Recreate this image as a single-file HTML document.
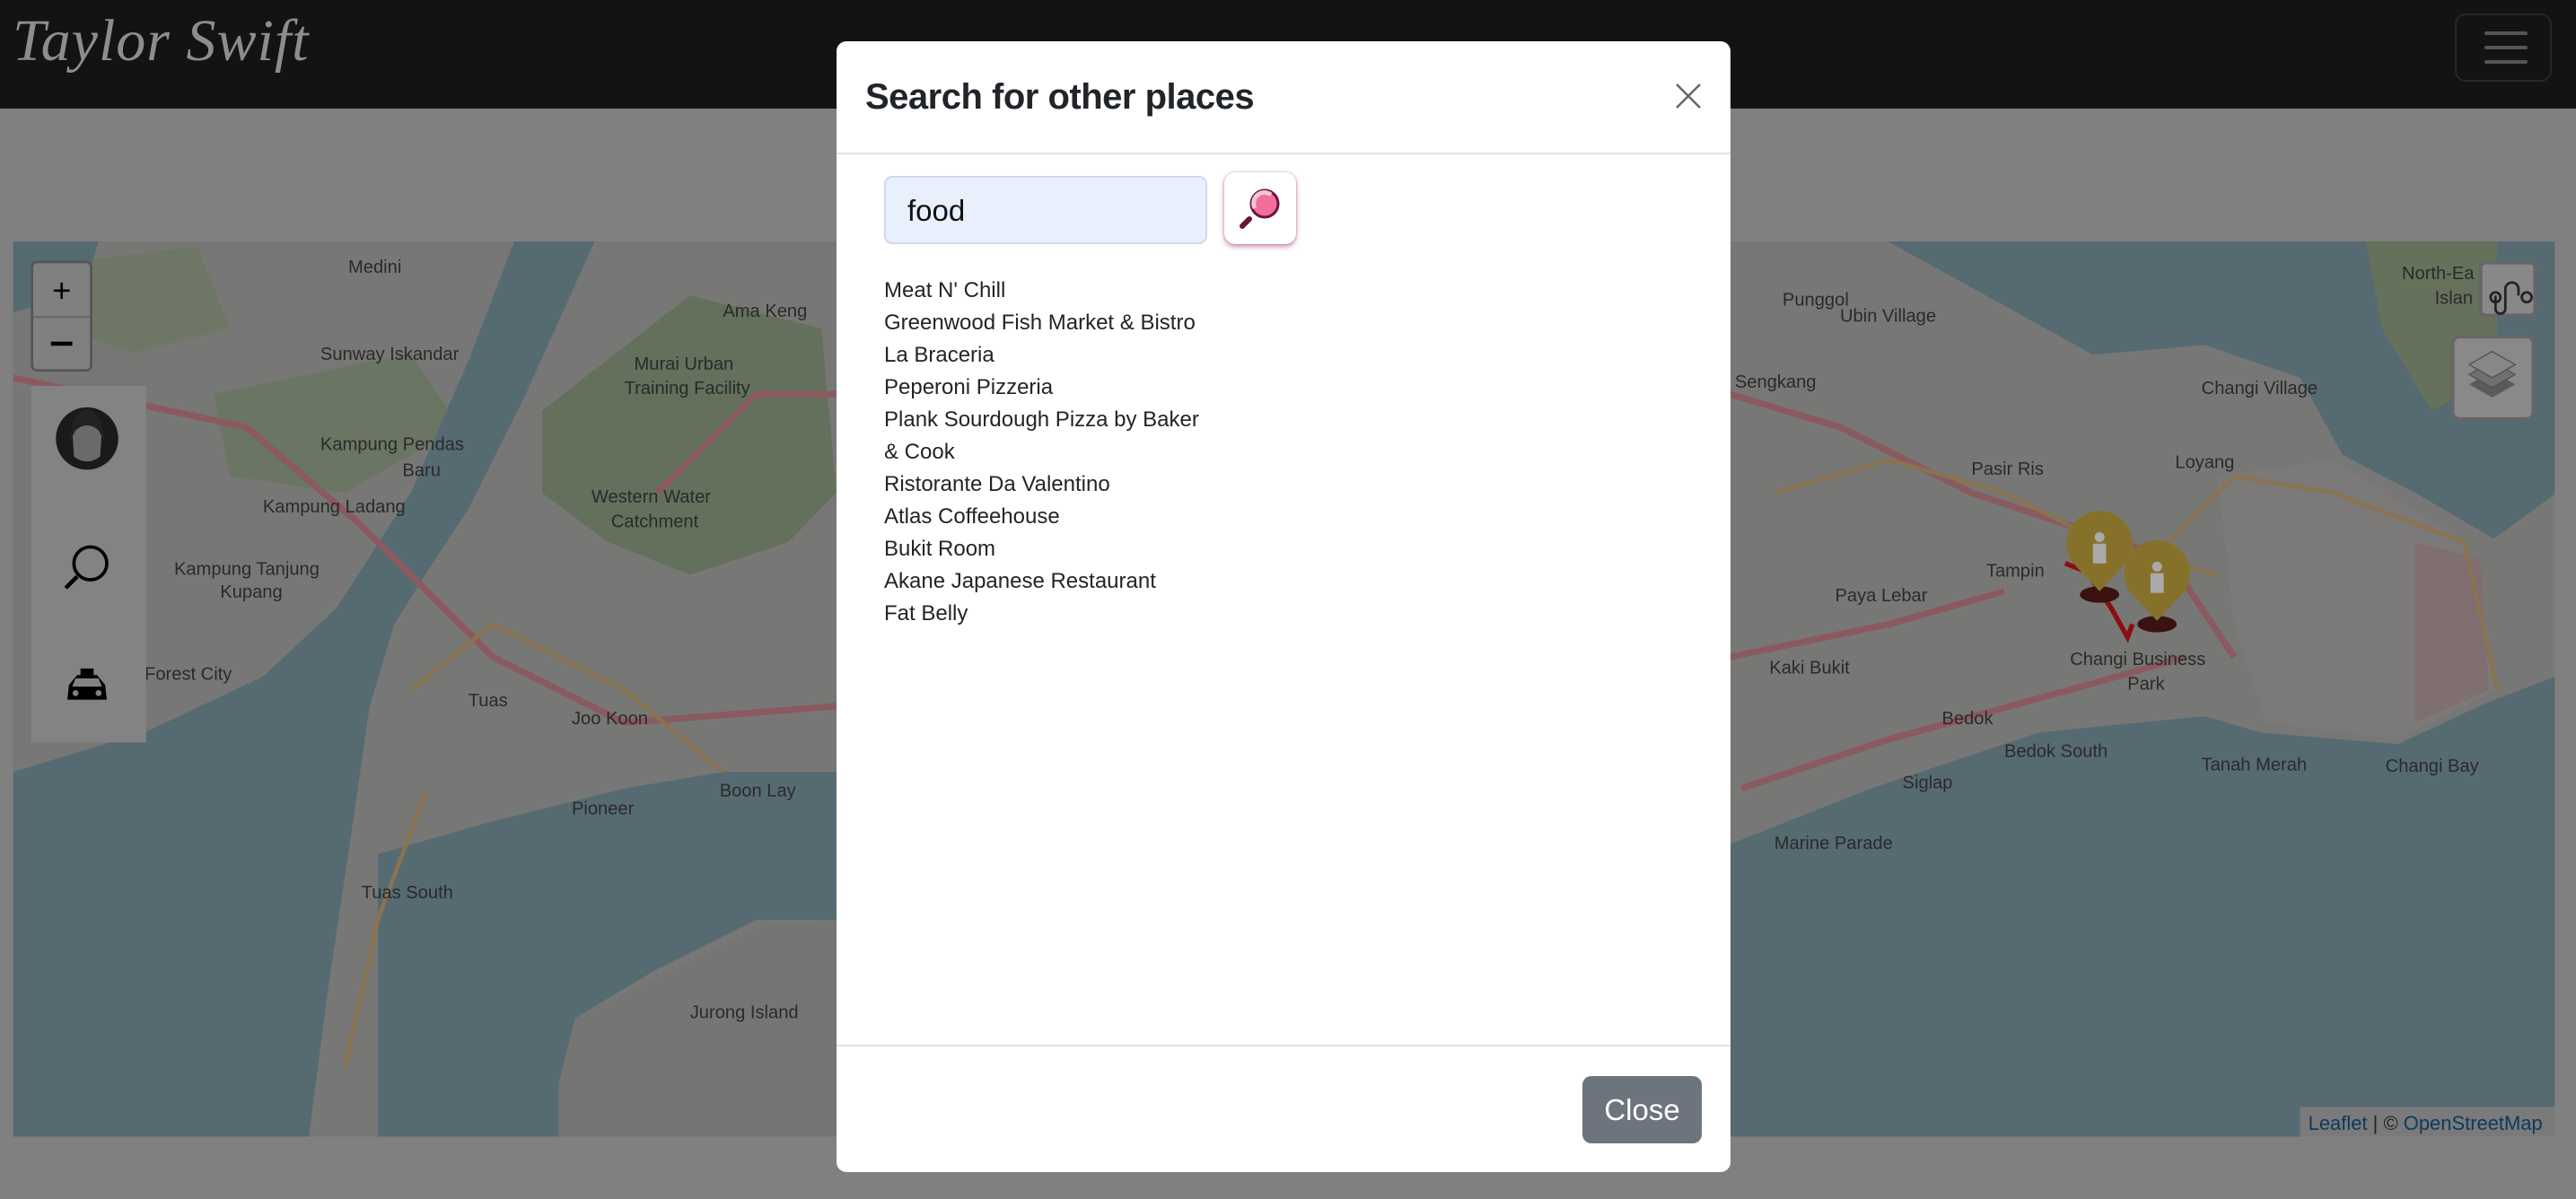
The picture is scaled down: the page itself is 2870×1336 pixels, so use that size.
<!DOCTYPE html>
<html><head><meta charset="utf-8"><style>
html,body{margin:0;padding:0}
body{width:2870px;height:1336px;position:relative;overflow:hidden;background:#808080;font-family:"Liberation Sans",sans-serif}
.nav{position:absolute;left:0;top:0;width:2870px;height:121px;background:#121315}
.logo{position:absolute;left:14px;top:8px;font-family:"Liberation Serif",serif;font-style:italic;font-size:66px;color:#8d8d8d;letter-spacing:1px;font-weight:normal}
.ham{position:absolute;left:2735px;top:15px;width:108px;height:76px;border:2px solid #262729;border-radius:12px;box-sizing:border-box}
.ham i{position:absolute;left:31px;width:48px;height:4px;background:#555;border-radius:2px}
svg.map{position:absolute;left:0;top:0}
.modal{position:absolute;left:932px;top:46px;width:996px;height:1260px;background:#fff;border-radius:11px;box-sizing:border-box}
.title{position:absolute;left:32px;top:40px;font-size:40px;color:#212529;font-weight:bold;letter-spacing:-0.5px}
.x{position:absolute;left:934px;top:46px}
.hr1{position:absolute;left:0;top:124px;width:996px;height:2px;background:#dee2e6}
.hr2{position:absolute;left:0;top:1118px;width:996px;height:2px;background:#dee2e6}
.inp{position:absolute;left:53px;top:150px;width:360px;height:76px;background:#e8f0fe;border:2px solid #cfd9ea;border-radius:9px;box-sizing:border-box;font-size:33px;color:#111;padding:18px 0 0 24px}
.btn{position:absolute;left:432px;top:146px;width:80px;height:80px;background:#fff;border-radius:12px;box-shadow:0 3px 6px rgba(170,60,130,.55),0 0 2px rgba(170,60,130,.5)}
.list{position:absolute;left:53px;top:260px;width:360px;font-size:24px;line-height:36px;color:#212529}
.close{position:absolute;left:831px;top:1153px;width:133px;height:75px;background:#6c757d;color:#fff;border-radius:10px;font-size:33px;text-align:center;line-height:75px}
</style></head><body>
<div class="nav"><div class="logo">Taylor Swift</div>
<div class="ham"><i style="top:18px"></i><i style="top:34px"></i><i style="top:50px"></i></div></div>

<svg class="map" width="2870" height="1336" viewBox="0 0 1568 730" preserveAspectRatio="none">
<rect x="8" y="147" width="1547" height="545" fill="#777875"/>
<path d="M330,250 L420,180 L500,200 L509,300 L480,330 L420,350 L370,330 L330,300Z" fill="#63705c"/>
<path d="M130,240 L250,215 L280,260 L210,300 L140,290Z" fill="#6b7564"/>
<path d="M40,160 L120,150 L140,200 L80,215 L40,200Z" fill="#6e7766"/>
<path d="M1230,147 L1380,147 L1400,200 L1300,200 L1240,180Z" fill="#66725e"/>
<path d="M1430,150 L1555,150 L1555,300 L1480,260 L1440,200Z" fill="#67725d"/>
<path d="M313,147 L362,147 L320,240 L285,310 L262,345 L240,380 L225,430 L212,520 L200,600 L188,692 L8,692 L8,470 L90,445 L160,412 L205,370 L250,300 L285,220Z" fill="#566a72"/>
<path d="M230,520 L300,500 L380,480 L440,470 L509,470 L509,560 L460,560 L400,590 L350,620 L340,692 L230,692Z" fill="#566a72"/>
<path d="M340,660 L350,620 L400,595 L460,565 L509,560 L509,692 L340,692Z" fill="#757573"/>
<path d="M8,147 L60,147 L50,180 L8,190Z" fill="#566a72"/>
<path d="M1149,147 L1555,147 L1555,301 L1518,328 L1470,300 L1426,277 L1400,230 L1342,210 L1274,216 L1200,175Z" fill="#566a72"/>
<path d="M1440,147 L1520,147 L1520,230 L1480,250 L1450,200Z" fill="#66715c"/>
<path d="M1053,514 L1139,480 L1241,446 L1342,436 L1376,446 L1460,453 L1511,429 L1555,412 L1555,692 L1053,692Z" fill="#566a72"/>
<path d="M1350,290 L1420,280 L1500,330 L1520,420 L1460,450 L1380,440 L1360,380Z" fill="#7c7a78"/>
<path d="M1470,330 L1510,340 L1515,420 L1470,440Z" fill="#806f70"/>
<g fill="none" stroke="#8a5a60" stroke-width="4">
<path d="M8,230 L150,260 L220,320 L300,400 L380,440 L509,430"/>
<path d="M400,300 L460,240 L509,240"/>
<path d="M1053,240 L1120,260 L1200,300 L1260,320 L1320,340 L1360,400"/>
<path d="M1060,480 L1150,450 L1260,420 L1330,400"/>
<path d="M1053,400 L1150,380 L1220,360"/>
</g>
<g fill="none" stroke="#8a7350" stroke-width="2.5">
<path d="M250,420 L300,380 L380,420 L440,470"/>
<path d="M210,650 L230,560 L260,480"/>
<path d="M1080,300 L1150,280 L1220,300 L1280,330 L1350,350"/>
<path d="M1320,330 L1360,290 L1420,300 L1500,330 L1520,420"/>
</g>
<path d="M1257,343 L1270,348 L1285,370 L1295,388 L1298,380" fill="none" stroke="#8b0f0f" stroke-width="3"/>
<ellipse cx="1278" cy="362" rx="12" ry="5" fill="#3a1210"/>
<ellipse cx="1313" cy="380" rx="12" ry="5" fill="#3a1210"/>
<path d="M1278,360 L1262,343 A20,20 0 1 1 1294,343Z" fill="#86712b"/>
<path d="M1313,378 L1297,361 A20,20 0 1 1 1329,361Z" fill="#86712b"/>
<circle cx="1278" cy="327" r="3" fill="#aaa"/><rect x="1274" y="331" width="8" height="12" fill="#aaa"/>
<circle cx="1313" cy="345" r="3" fill="#aaa"/><rect x="1309" y="349" width="8" height="12" fill="#aaa"/>
<g font-family="Liberation Sans,sans-serif" font-size="11" fill="#2a2a2a">
<text x="212" y="166">Medini</text><text x="195" y="219">Sunway Iskandar</text><text x="195" y="274">Kampung Pendas</text><text x="245" y="290">Baru</text>
<text x="160" y="312">Kampung Ladang</text><text x="106" y="350">Kampung Tanjung</text><text x="134" y="364">Kupang</text><text x="88" y="414">Forest City</text>
<text x="440" y="193">Ama Keng</text><text x="386" y="225">Murai Urban</text><text x="380" y="240">Training Facility</text>
<text x="360" y="306">Western Water</text><text x="372" y="321">Catchment</text><text x="285" y="430">Tuas</text><text x="348" y="441">Joo Koon</text>
<text x="348" y="496">Pioneer</text><text x="438" y="485">Boon Lay</text><text x="220" y="547">Tuas South</text><text x="420" y="620">Jurong Island</text>
<text x="1085" y="186">Punggol</text><text x="1120" y="196">Ubin Village</text><text x="1056" y="236">Sengkang</text><text x="1340" y="240">Changi Village</text>
<text x="1200" y="289">Pasir Ris</text><text x="1324" y="285">Loyang</text><text x="1117" y="366">Paya Lebar</text><text x="1209" y="351">Tampin</text>
<text x="1077" y="410">Kaki Bukit</text><text x="1260" y="405">Changi Business</text><text x="1295" y="420">Park</text><text x="1182" y="441">Bedok</text>
<text x="1220" y="461">Bedok South</text><text x="1158" y="480">Siglap</text><text x="1080" y="517">Marine Parade</text><text x="1340" y="469">Tanah Merah</text><text x="1452" y="470">Changi Bay</text>
<text x="1462" y="170">North-Ea</text><text x="1482" y="185">Islan</text>
</g>
<rect x="1400" y="674" width="155" height="18" fill="#7a7a7a"/>
<text x="1405" y="688" font-family="Liberation Sans,sans-serif" font-size="12" fill="#0b3a5c">Leaflet <tspan fill="#222">| © </tspan>OpenStreetMap</text>
<rect x="19.5" y="159.5" width="36" height="66" rx="3" fill="#808080" stroke="#555" stroke-width="1.5"/>
<line x1="20" y1="193" x2="55" y2="193" stroke="#666"/>
<text x="37.5" y="184" text-anchor="middle" font-size="20" font-family="Liberation Sans,sans-serif" fill="#000">+</text>
<rect x="31" y="208" width="13" height="2.5" fill="#000"/>
<rect x="19" y="235" width="70" height="217" fill="#838383"/>
<circle cx="53" cy="267" r="19" fill="#1a1a1a"/><path d="M44,262 Q44,252 53,251 Q62,252 62,262 L61,278 Q53,284 45,278Z" fill="#6a6a6a"/>
<path d="M42,270 Q44,250 53,249 Q62,250 64,270 L60,262 Q53,256 46,262Z" fill="#222"/>
<circle cx="55" cy="343" r="10" fill="none" stroke="#000" stroke-width="2"/><line x1="47" y1="351" x2="40" y2="358" stroke="#000" stroke-width="2.5"/>
<path d="M41,426 L42,417 L47,411 L59,411 L64,417 L65,426Z" fill="#000"/><rect x="49" y="407" width="8" height="4" fill="#000"/>
<path d="M46,413 L60,413 L62,418 L44,418Z" fill="#838383"/>
<circle cx="46" cy="422" r="1.8" fill="#838383"/><circle cx="60" cy="422" r="1.8" fill="#838383"/>
<rect x="510" y="160" width="0" height="0"/>
<rect x="1510" y="160" width="33" height="32" rx="3" fill="#888" stroke="#666" stroke-width="2"/>
<path d="M1519,180 v8 a3,3 0 0 0 6,0 v-12 a4,4 0 0 1 8,0 v4" fill="none" stroke="#222" stroke-width="1.5"/>
<circle cx="1519" cy="181" r="3" fill="none" stroke="#222" stroke-width="1.5"/><circle cx="1538" cy="181" r="3" fill="none" stroke="#222" stroke-width="1.5"/>
<rect x="1493" y="205" width="49" height="50" rx="4" fill="#898989" stroke="#666" stroke-width="2"/>
<path d="M1517,226 L1531,234 L1517,242 L1503,234Z" fill="#5a5a5a"/>
<path d="M1517,220 L1531,228 L1517,236 L1503,228Z" fill="#707070" stroke="#555" stroke-width="0.8"/>
<path d="M1517,214 L1531,222 L1517,230 L1503,222Z" fill="#888" stroke="#555" stroke-width="0.8"/>
</svg>

<div class="modal">
<div class="title">Search for other places</div>
<svg class="x" width="30" height="30" viewBox="0 0 30 30"><path d="M2,2 L28,28 M28,2 L2,28" stroke="#666" stroke-width="2.5"/></svg>
<div class="hr1"></div>
<div class="inp">food</div>
<div class="btn"><svg width="80" height="80" viewBox="0 0 80 80">
<line x1="28" y1="52" x2="20" y2="60" stroke="#6b1240" stroke-width="6" stroke-linecap="round"/>
<circle cx="45" cy="35" r="15" fill="#f06e9a" stroke="#6b1240" stroke-width="3"/>
<path d="M34,40 A12,12 0 0 1 52,25" fill="none" stroke="#f1c4d1" stroke-width="5"/>
</svg></div>
<div class="list">Meat N' Chill<br>Greenwood Fish Market &amp; Bistro<br>La Braceria<br>Peperoni Pizzeria<br>Plank Sourdough Pizza by Baker<br>&amp; Cook<br>Ristorante Da Valentino<br>Atlas Coffeehouse<br>Bukit Room<br>Akane Japanese Restaurant<br>Fat Belly</div>
<div class="hr2"></div>
<div class="close">Close</div>
</div>
</body></html>
